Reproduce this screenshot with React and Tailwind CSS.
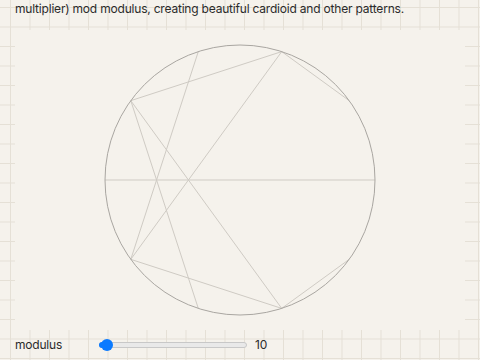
import React from "react";

export default function App() {
  const n = 10;
  const m = 2;
  const cx = 225;
  const cy = 150;
  const r = 135;
  const pts = Array.from({ length: n }, (_, i) => {
    const a = (2 * Math.PI * i) / n;
    return [cx + r * Math.cos(a), cy + r * Math.sin(a)];
  });
  const lines = pts.map((p, i) => {
    const j = (i * m) % n;
    return [p, pts[j]];
  });
  return (
    <div
      className="w-[480px] h-[360px] overflow-hidden bg-[#f5f2ec] bg-[image:linear-gradient(to_right,#e5e0d6_1px,transparent_1px),linear-gradient(to_bottom,#e5e0d6_1px,transparent_1px)] bg-[size:19.5px_19.5px] bg-[position:10px_7px] text-[#2b2b2b]"
      style={{ fontFamily: "Inter, 'Noto Sans', sans-serif" }}
    >
      <div className="px-[15px] flex flex-col">
        <div className="h-[30px] text-[12px] leading-[16px] tracking-[-0.2px] pt-[1px]">
          multiplier) mod modulus, creating beautiful cardioid and other patterns.
        </div>
        <div className="w-[450px] h-[300px] bg-[#f5f2ec]">
          <svg width="450" height="300" viewBox="0 0 450 300">
            {lines.map(([a, b], k) => (
              <line
                key={k}
                x1={a[0]}
                y1={a[1]}
                x2={b[0]}
                y2={b[1]}
                stroke="#cfcbc4"
                strokeWidth="1"
              />
            ))}
            <circle cx={cx} cy={cy} r={r} fill="none" stroke="#a9a6a1" strokeWidth="1" />
          </svg>
        </div>
        <div className="h-[30px] flex items-center text-[12px] tracking-[-0.2px]">
          <span className="w-[84px]">modulus</span>
          <div className="relative w-[148px] h-[12px] flex items-center">
            <div className="w-full h-[6px] rounded-full bg-[#e9e9e9] border border-[#c8c8c8]" />
            <div className="absolute left-0 top-[3px] w-[10px] h-[6px] rounded-l-full bg-[#0a7aff]" />
            <div className="absolute left-[2px] top-0 w-[12px] h-[12px] rounded-full bg-[#0a7aff]" />
          </div>
          <span className="ml-[8px]">10</span>
        </div>
      </div>
    </div>
  );
}
